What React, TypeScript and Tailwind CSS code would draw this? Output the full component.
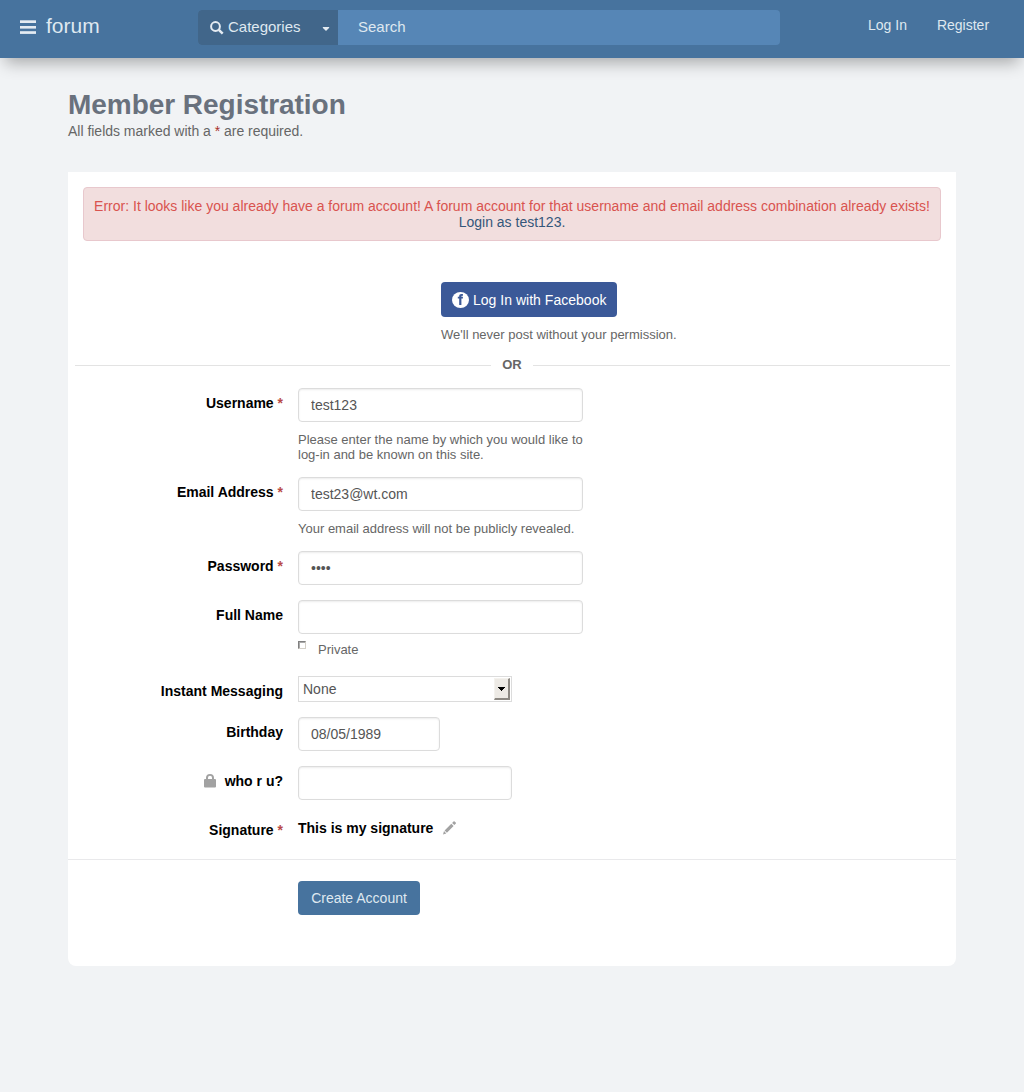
import type { ReactNode } from "react";

function Field({
  label,
  required,
  icon,
  height,
  children,
}: {
  label: string;
  required?: boolean;
  icon?: ReactNode;
  height: string;
  children: ReactNode;
}) {
  return (
    <div className={`flex gap-[15px] ${height}`}>
      <div className="flex w-[215px] shrink-0 justify-end pt-[7px] leading-4 font-bold text-black">
        {icon}
        <span className="whitespace-nowrap">
          {label}
          {required && <span className="text-[#b94a48]"> *</span>}
        </span>
      </div>
      <div>{children}</div>
    </div>
  );
}

function Input({ width, value = "", type = "text" }: { width: string; value?: string; type?: string }) {
  return (
    <input
      type={type}
      defaultValue={value}
      className={`block h-[34px] rounded border border-[#dcdcdc] bg-white px-3 text-[14px] text-[#555] shadow-[inset_0_1px_2px_rgba(0,0,0,0.08)] outline-none ${width}`}
    />
  );
}

function Lock() {
  return (
    <svg width="12" height="14" viewBox="0 0 12 14" className="mt-px mr-[9px]" fill="#a2a2a2">
      <path
        fillRule="evenodd"
        d="M1 5h1V3.800a4 3.800 0 0 1 8 0V5h1a1 1 0 0 1 1 1v6.500a1 1 0 0 1-1 1H1a1 1 0 0 1-1-1V6a1 1 0 0 1 1-1ZM4 5h4V3.700a2 1.900 0 0 0-4 0Z"
      />
    </svg>
  );
}

export default function App() {
  return (
    <div className="min-h-[1092px] bg-[#f1f3f5] font-['Liberation_Sans',Arial,sans-serif] text-[14px] leading-4 text-[#666]">
      <header className="flex h-[58px] bg-[#47739e] text-[#dfe8f0] shadow-[0_10px_15px_-5px_rgba(0,0,0,0.3)]">
        <div className="flex w-[198px] items-start pl-5">
          <svg width="16" height="14" viewBox="0 0 16 14" className="mt-5" fill="#e4ebf2">
            <rect y="0.300" width="16" height="2.700" />
            <rect y="6" width="16" height="2.600" />
            <rect y="11.200" width="16" height="2.700" />
          </svg>
          <span className="ml-[10px] mt-[14px] text-[21px] leading-6">forum</span>
        </div>
        <div className="mt-[10px] flex h-[35px] w-[582px] overflow-hidden rounded-[4px] bg-[#5686b6] text-[15px]">
          <div className="flex w-[140px] items-center bg-[#41668a] pl-3">
            <svg width="14" height="14" viewBox="0 0 14 14" fill="none" stroke="#e4ebf2" className="mt-px">
              <circle cx="5.500" cy="5.500" r="4.400" strokeWidth="2" />
              <path d="m8.800 8.800 3.900 3.900" strokeWidth="2.500" />
            </svg>
            <span className="-mt-0.5 ml-1 w-[94px]">Categories</span>
            <svg width="8" height="4" viewBox="0 0 8 4" className="mt-[3px]" fill="#e4ebf2">
              <path d="M1 0h6l.3.700L4 4 .7.700Z" />
            </svg>
          </div>
          <span className="pl-5 leading-[34px]">Search</span>
        </div>
        <nav className="ml-[88px] mt-[17px] flex gap-[30px]">
          <a>Log In</a>
          <a>Register</a>
        </nav>
      </header>

      <main className="mx-[68px] pt-[30px]">
        <h1 className="text-[28px] leading-[33px] font-bold tracking-[-0.04px] text-[#69717d]">Member Registration</h1>
        <p className="mt-0.5 tracking-[-0.015px]">
          All fields marked with a <span className="text-[#a9302d]">*</span> are required.
        </p>

        <section className="mt-[33px] h-[794px] rounded-b-lg bg-white pt-[15px]">
          <div className="mx-[15px] h-[54px] rounded border border-[#e8c8cd] bg-[#f2dede] pt-[10px] text-center whitespace-nowrap text-[#d9534f]">
            <p>
              Error: It looks like you already have a forum account! A forum account for that username and email
              address combination already exists!
            </p>
            <a className="text-[#34567a]">Login as test123.</a>
          </div>

          <div className="mt-[41px] ml-[373px]">
            <button className="flex h-[35px] w-[176px] items-center rounded bg-[#3b5998] pl-[11px] text-white">
              <svg width="17" height="16" viewBox="0 0 17 16" className="mr-1">
                <ellipse cx="8.500" cy="8" rx="8.500" ry="8" fill="#fff" />
                <path
                  d="M7.200 13V6.500H5.800V4.800h1.400v-.5C7.200 2.800 8 2 9.500 2c.6 0 1.100.1 1.500.2v1.600h-.7c-.7 0-.9.300-.9.800v.2h1.500v1.700H9.400V13Z"
                  fill="#3b5998"
                />
              </svg>
              <span className="whitespace-nowrap tracking-[0.02px]">Log In with Facebook</span>
            </button>
            <p className="mt-[10px] text-[13px] leading-[15px]">We'll never post without your permission.</p>
          </div>

          <div className="mt-[14px] mr-1.5 ml-[7px] flex h-4 items-center text-[13px] leading-4 font-bold">
            <i className="mt-[3px] h-px w-[416px] bg-[#e3e3e3]" />
            <span className="w-[42px] pt-px text-center">OR</span>
            <i className="mt-[3px] h-px flex-1 bg-[#e3e3e3]" />
          </div>

          <div className="mt-[16px]">
            <Field label="Username" required height="h-[89px]">
              <Input width="w-[285px]" value="test123" />
              <p className="mt-[10px] w-[300px] text-[13px] leading-[15px]">
                Please enter the name by which you would like to
                <br />
                log-in and be known on this site.
              </p>
            </Field>
            <Field label="Email Address" required height="h-[74px]">
              <Input width="w-[285px]" value="test23@wt.com" />
              <p className="mt-[10px] text-[13px] leading-[15px]">Your email address will not be publicly revealed.</p>
            </Field>
            <Field label="Password" required height="h-[49px]">
              <Input width="w-[285px]" value="test" type="password" />
            </Field>
            <Field label="Full Name" height="h-[76px]">
              <Input width="w-[285px]" />
              <label className="flex pt-[7px] text-[13px] leading-[18px]">
                <span className="mr-3 h-2 w-2 border border-t-[#808080] border-r-[#d4d0c8] border-b-[#d4d0c8] border-l-[#808080] bg-white shadow-[inset_1px_1px_0_#aaa]" />
                Private
              </label>
            </Field>
            <Field label="Instant Messaging" height="h-[41px]">
              <div className="flex h-[26px] w-[214px] items-center justify-between border border-[#dcdcdc] pr-px pl-1 text-[#555]">
                <span>None</span>
                <span className="flex h-[22px] w-4 items-center justify-center border-t border-r-2 border-b-2 border-l border-t-[#f4f2ee] border-r-[#8d8983] border-b-[#8d8983] border-l-[#f4f2ee] bg-[#edeae5]">
                  <svg width="7" height="4" viewBox="0 0 7 4" fill="#000" shapeRendering="crispEdges">
                    <path d="M0 0h7v1H6v1H5v1H4v1H3V3H2V2H1V1H0Z" />
                  </svg>
                </span>
              </div>
            </Field>
            <Field label="Birthday" height="h-[49px]">
              <Input width="w-[142px]" value="08/05/1989" />
            </Field>
            <Field label="who r u?" height="h-[49px]" icon={<Lock />}>
              <Input width="w-[214px]" />
            </Field>
            <Field label="Signature" required height="h-[44px]">
              <div className="flex pt-[5px] font-bold text-black">
                <span>This is my signature</span>
                <svg width="13" height="14" viewBox="0 0 13 14" className="ml-[10px] mt-px" fill="#a2a2a2">
                  <path d="m0 13.500 1-3.400 2.300 2.300ZM1.600 9.400l6.700-6.700 2.300 2.300-6.700 6.700ZM9.100 1.900 10.500.5a.8.8 0 0 1 1.100 0l1.100 1.100a.8.8 0 0 1 0 1.100l-1.400 1.400Z" />
                </svg>
              </div>
            </Field>
          </div>

          <div className="border-t border-[#e9e9eb] pt-[21px] pl-[230px]">
            <button className="h-[34px] w-[122px] rounded bg-[#47739e] text-[#dfe8f0]">Create Account</button>
          </div>
        </section>
      </main>
    </div>
  );
}
